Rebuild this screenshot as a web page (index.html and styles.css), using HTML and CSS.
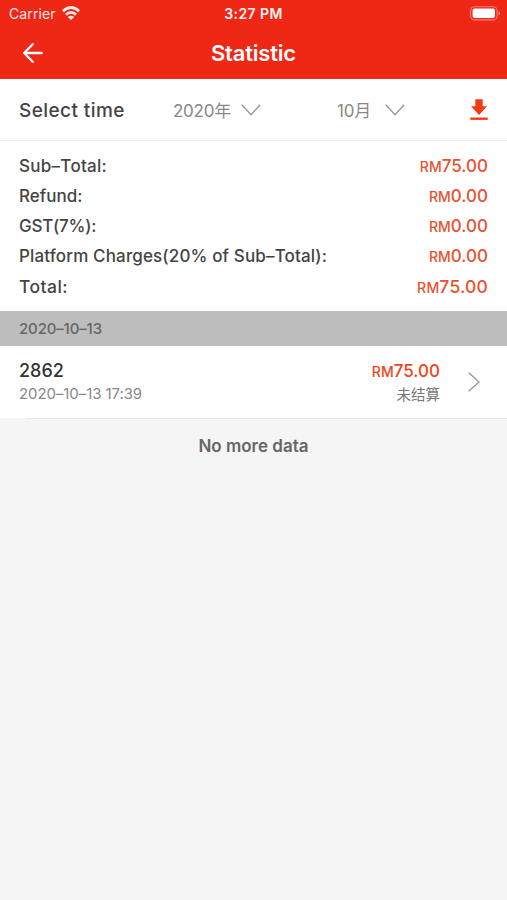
FILE: index.html
```html
<!DOCTYPE html>
<html lang="en">
<head>
<meta charset="utf-8">
<title>Statistic</title>
<link rel="stylesheet" href="styles.css">
</head>
<body>
<header class="top">
  <div class="status">
    <div class="carrier"><span>Carrier</span>
      <svg class="wifi" width="18" height="14" viewBox="0 0 18 14" fill="none" stroke="#fff" stroke-width="2.8"><path d="M.9 5.2Q9-2.1 17.1 5.2M3.9 8.6q5.1-4.4 10.2 0"/><path d="M9 14 5.8 10.9q3.2-2.3 6.4 0z" fill="#fff" stroke="none"/></svg>
    </div>
    <time class="clock">3:27 PM</time>
    <svg class="battery" width="31" height="15" viewBox="0 0 31 15"><rect x=".6" y=".7" width="26.5" height="13.2" rx="3.8" fill="none" stroke="#fff" stroke-opacity=".4" stroke-width="1.1"/><rect x="2.6" y="2.6" width="22.4" height="9.4" rx="2" fill="#fff"/><path d="M28.5 5v4.6q1.6-.8 1.6-2.3T28.5 5z" fill="#fff" fill-opacity=".5"/></svg>
  </div>
  <nav class="nav">
    <svg class="back" width="20" height="20" viewBox="0 0 20 20" fill="none" stroke="#fff" stroke-width="2.3" stroke-linecap="round" stroke-linejoin="round"><path d="M9.7 1.2 1.2 10l8.5 8.8M1.2 10h17.6"/></svg>
    <h1 class="title">Statistic</h1>
  </nav>
</header>
<section class="filter">
  <span class="filter-label">Select time</span>
  <div class="pick year"><span>2020年</span><svg class="chev" width="20" height="12" viewBox="0 0 20 12"><path d="M.8.7 10 10.7 19.2.7"/></svg></div>
  <div class="pick month"><span>10月</span><svg class="chev" width="20" height="12" viewBox="0 0 20 12"><path d="M.8.7 10 10.7 19.2.7"/></svg></div>
  <svg class="download" width="18" height="22" viewBox="0 0 18 22" fill="#f03c10"><path d="M5.3.3h7.4v7H17l-8 8.6-8-8.6h4.3z"/><path d="M.3 18.5h17.4v2.4H.3z"/></svg>
</section>
<dl class="summary">
  <div class="row"><dt class="sub">Sub–Total:</dt><dd><small>RM</small>75.00</dd></div>
  <div class="row"><dt>Refund:</dt><dd><small>RM</small>0.00</dd></div>
  <div class="row"><dt class="tax">GST(7%):</dt><dd><small>RM</small>0.00</dd></div>
  <div class="row"><dt class="fee">Platform Charges(20% of Sub–Total):</dt><dd><small>RM</small>0.00</dd></div>
  <div class="row total"><dt>Total:</dt><dd><small>RM</small>75.00</dd></div>
</dl>
<h2 class="day">2020–10–13</h2>
<article class="order">
  <div class="info"><strong class="number">2862</strong><time class="stamp">2020–10–13 17:39</time></div>
  <div class="amount"><span class="price"><small>RM</small>75.00</span><span class="state">未结算</span></div>
  <svg class="go" width="12" height="20" viewBox="0 0 12 20"><path d="M.7.8 11 10 .7 19.2"/></svg>
</article>
<p class="end">No more data</p>
</body>
</html>
```
FILE: styles.css
```css
* { box-sizing: border-box; margin: 0; padding: 0; }
body { min-height: 900px; background: #f5f5f5; color: #444; font-family: Inter, "Noto Sans CJK SC", sans-serif; overflow-x: hidden; }
svg { display: block; flex: none; }
.top { height: 79px; background: #ef2715; color: #fff; }
.status { height: 27px; display: grid; grid-template-columns: 1fr auto 1fr; align-items: center; padding: 0 6px; font-size: 14px; line-height: 27px; }
.carrier { display: flex; align-items: center; gap: 6px; padding-left: 3px; opacity: .9; letter-spacing: .1px; }
.wifi { margin-top: -2px; }
.clock { font-weight: 600; font-size: 14px; letter-spacing: .4px; opacity: .95; }
.battery { justify-self: end; margin-top: -1px; }
.nav { height: 52px; display: grid; grid-template-columns: 1fr auto 1fr; align-items: center; padding: 0 23px; }
.title { grid-column: 2; font-size: 22px; font-weight: 600; line-height: 50px; letter-spacing: -.2px; }
.back { margin-top: -1px; }
.filter { height: 62px; display: flex; align-items: center; padding: 0 19px; background: #fff; border-bottom: 1px solid #ececec; }
.filter-label { width: 154px; padding-top: 1px; font-size: 19px; font-weight: 500; letter-spacing: .42px; }
.pick { display: flex; align-items: center; gap: 10px; color: #888; font-size: 17px; letter-spacing: -.25px; }
.year { width: 164px; }
.month { gap: 14px; }
.chev, .go { fill: none; stroke: #999; stroke-width: 1.4; }
.download { margin-left: auto; }
.summary { height: 170px; padding: 10px 19px 0; background: #fff; }
.row { height: 30px; display: flex; justify-content: space-between; font-size: 17px; font-weight: 500; line-height: 31px; }
.sub { letter-spacing: .28px; }
.tax { letter-spacing: -.25px; }
.fee { letter-spacing: .14px; }
dd, .price { color: #e9512f; }
dd small, .price small { font-size: 14px; }
.total { font-size: 17.5px; letter-spacing: .2px; }
.total dt { letter-spacing: .45px; }
.day { height: 35px; padding-left: 19px; background: #bdbdbd; color: #666; font-size: 15px; font-weight: 500; line-height: 35px; letter-spacing: -.15px; }
.order { height: 72px; display: flex; padding: 13px 27px 0 19px; background: #fff; }
.info, .amount { display: flex; flex-direction: column; }
.amount { margin-left: auto; align-items: flex-end; }
.number, .price { font-size: 18px; font-weight: 500; line-height: 24px; }
.number { color: #333; }
.price { color: #ef431c; font-size: 17px; }
.stamp { color: #888; font-size: 15px; line-height: 22px; letter-spacing: -.08px; }
.state { color: #777; font-size: 14.5px; line-height: 22px; }
.go { margin: 13px 0 0 28px; }
.end { margin-left: 26px; padding: 16px 26px 0 0; border-top: 1px solid #e8e8e8; color: #666; font-size: 17px; font-weight: 600; line-height: 22px; text-align: center; }
```
